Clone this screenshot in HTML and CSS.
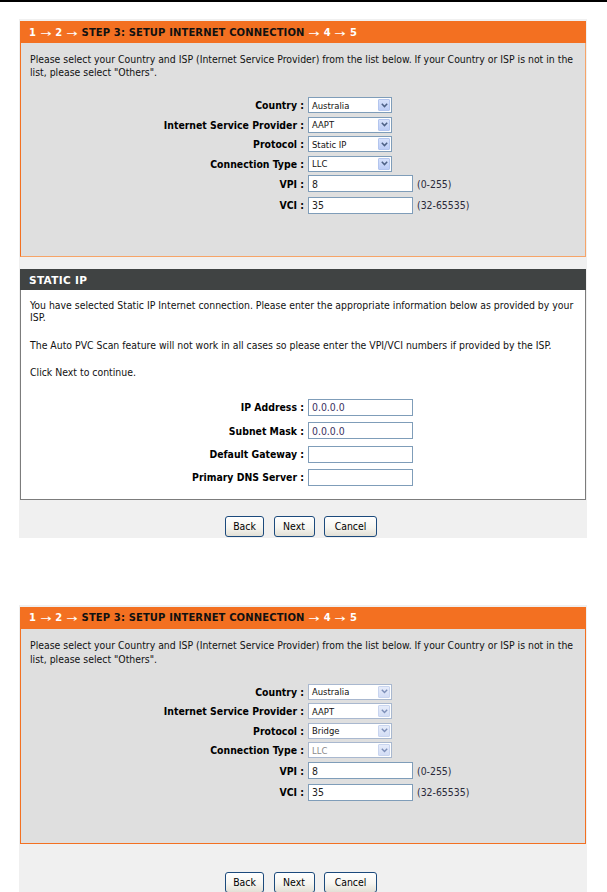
FILE: index.html
```html
<!DOCTYPE html>
<html>
<head>
<meta charset="utf-8">
<title>Setup Internet Connection</title>
<link rel="stylesheet" href="styles.css">
</head>
<body>
<div class="topbar"></div>

<div class="section s1">
  <div class="panel orange">
    <div class="ph"><span class="wt">1 <span class="arr">→</span> 2 <span class="arr">→</span></span> STEP 3: SETUP INTERNET CONNECTION <span class="wt"><span class="arr">→</span> 4 <span class="arr">→</span> 5</span></div>
    <div class="pb">
      <p class="txt1">Please select your Country and ISP (Internet Service Provider) from the list below. If your Country or ISP is not in the<br>list, please select "Others".</p>
      <div class="form">
        <div class="row r-sel"><span class="lbl">Country :</span><div class="sel"><span class="val">Australia</span><span class="dd"><svg width="7" height="5" viewBox="0 0 7 5"><path d="M0.8 0.8 L3.5 3.6 L6.2 0.8" fill="none" stroke="#4d6185" stroke-width="1.5"/></svg></span></div></div>
        <div class="row r-sel"><span class="lbl">Internet Service Provider :</span><div class="sel"><span class="val">AAPT</span><span class="dd"><svg width="7" height="5" viewBox="0 0 7 5"><path d="M0.8 0.8 L3.5 3.6 L6.2 0.8" fill="none" stroke="#4d6185" stroke-width="1.5"/></svg></span></div></div>
        <div class="row r-sel"><span class="lbl">Protocol :</span><div class="sel"><span class="val">Static IP</span><span class="dd"><svg width="7" height="5" viewBox="0 0 7 5"><path d="M0.8 0.8 L3.5 3.6 L6.2 0.8" fill="none" stroke="#4d6185" stroke-width="1.5"/></svg></span></div></div>
        <div class="row r-sel"><span class="lbl">Connection Type :</span><div class="sel"><span class="val">LLC</span><span class="dd"><svg width="7" height="5" viewBox="0 0 7 5"><path d="M0.8 0.8 L3.5 3.6 L6.2 0.8" fill="none" stroke="#4d6185" stroke-width="1.5"/></svg></span></div></div>
        <div class="row r-vpi"><span class="lbl">VPI :</span><input class="txt" type="text" value="8"><span class="hint">(0-255)</span></div>
        <div class="row r-vci"><span class="lbl">VCI :</span><input class="txt" type="text" value="35"><span class="hint">(32-65535)</span></div>
      </div>
    </div>
  </div>

  <div class="panel dark">
    <div class="ph dh">STATIC IP</div>
    <div class="pb sb">
      <p class="txt2">You have selected Static IP Internet connection. Please enter the appropriate information below as provided by your<br>ISP.</p>
      <p class="txt2">The Auto PVC Scan feature will not work in all cases so please enter the VPI/VCI numbers if provided by the ISP.</p>
      <p class="txt2">Click Next to continue.</p>
      <div class="form">
        <div class="row r-ip"><span class="lbl">IP Address :</span><input class="txt ipv" type="text" value="0.0.0.0"></div>
        <div class="row r-ip"><span class="lbl">Subnet Mask :</span><input class="txt ipv" type="text" value="0.0.0.0"></div>
        <div class="row r-ip"><span class="lbl">Default Gateway :</span><input class="txt ipv" type="text" value=""></div>
        <div class="row r-ip"><span class="lbl">Primary DNS Server :</span><input class="txt ipv" type="text" value=""></div>
      </div>
    </div>
  </div>

  <div class="btnbar">
    <button class="btn b-back" type="button">Back</button>
    <button class="btn b-next" type="button">Next</button>
    <button class="btn b-cancel" type="button">Cancel</button>
  </div>
</div>

<div class="section s2">
  <div class="panel orange o2">
    <div class="ph"><span class="wt">1 <span class="arr">→</span> 2 <span class="arr">→</span></span> STEP 3: SETUP INTERNET CONNECTION <span class="wt"><span class="arr">→</span> 4 <span class="arr">→</span> 5</span></div>
    <div class="pb">
      <p class="txt1 lh14">Please select your Country and ISP (Internet Service Provider) from the list below. If your Country or ISP is not in the<br>list, please select "Others".</p>
      <div class="form f2">
        <div class="row r-sel"><span class="lbl">Country :</span><div class="sel light"><span class="val">Australia</span><span class="dd"><svg width="7" height="5" viewBox="0 0 7 5"><path d="M0.8 0.8 L3.5 3.6 L6.2 0.8" fill="none" stroke="#7d8fb8" stroke-width="1.4"/></svg></span></div></div>
        <div class="row r-sel"><span class="lbl">Internet Service Provider :</span><div class="sel light"><span class="val">AAPT</span><span class="dd"><svg width="7" height="5" viewBox="0 0 7 5"><path d="M0.8 0.8 L3.5 3.6 L6.2 0.8" fill="none" stroke="#7d8fb8" stroke-width="1.4"/></svg></span></div></div>
        <div class="row r-sel"><span class="lbl">Protocol :</span><div class="sel light"><span class="val">Bridge</span><span class="dd"><svg width="7" height="5" viewBox="0 0 7 5"><path d="M0.8 0.8 L3.5 3.6 L6.2 0.8" fill="none" stroke="#7d8fb8" stroke-width="1.4"/></svg></span></div></div>
        <div class="row r-sel"><span class="lbl">Connection Type :</span><div class="sel light"><span class="val dis">LLC</span><span class="dd"><svg width="7" height="5" viewBox="0 0 7 5"><path d="M0.8 0.8 L3.5 3.6 L6.2 0.8" fill="none" stroke="#7d8fb8" stroke-width="1.4"/></svg></span></div></div>
        <div class="row r-vpi"><span class="lbl">VPI :</span><input class="txt" type="text" value="8"><span class="hint">(0-255)</span></div>
        <div class="row r-vci"><span class="lbl">VCI :</span><input class="txt" type="text" value="35"><span class="hint">(32-65535)</span></div>
      </div>
    </div>
  </div>

  <div class="btnbar bb2">
    <button class="btn b-back" type="button">Back</button>
    <button class="btn b-next" type="button">Next</button>
    <button class="btn b-cancel" type="button">Cancel</button>
  </div>
</div>
</body>
</html>
```

FILE: styles.css
```css
* { box-sizing: border-box; }

body {
  margin: 0;
  background: #ffffff;
  font-family: "DejaVu Sans Condensed", "DejaVu Sans", sans-serif;
  font-size: 10.4px;
  color: #111111;
}

.topbar {
  height: 2px;
  background: #000000;
}

.section {
  width: 568px;
  margin-left: 19px;
  background: #f0f0f0;
  padding: 2px 1px 0 1px;
}

.s1 { margin-top: 17px; }
.s2 { margin-top: 67px; height: 300px; }

.panel { width: 566px; }

.ph {
  height: 22px;
  display: flex;
  align-items: center;
  padding-left: 9px;
  background: #f37021;
  color: #111111;
  font-family: "DejaVu Sans", sans-serif;
  font-weight: bold;
  font-size: 10px;
  letter-spacing: 0.12px;
  white-space: pre;
}

.wt { color: #ffffff; }

.arr {
  display: inline-block;
  width: 12px;
  text-align: center;
  font-weight: normal;
  transform: scaleX(1.35);
  position: relative;
  top: 1px;
}

.pb {
  background: #dfdfdf;
  border: 1px solid #f6a468;
  border-left-color: #f37021;
  border-top: none;
  padding: 9.5px 8px 39.75px 9px;
}

.o2 .pb { border-color: #f37021; }

.dark { margin-top: 12px; }

.dh {
  height: 21px;
  background: #404343;
  color: #ffffff;
  font-size: 10.5px;
  letter-spacing: 0.35px;
}

.sb {
  background: #ffffff;
  border: 1px solid #7c7c7c;
  border-top: none;
  padding: 8.75px 8px 9.9px 9px;
}

p { margin: 0; white-space: nowrap; }

.txt1 { line-height: 13px; }
.lh14 { line-height: 14px; }

.txt2 { line-height: 12.5px; margin-bottom: 15px; }
.txt2:last-of-type { margin-bottom: 0; }

.form { margin-top: 16.75px; }
.f2 { margin-top: 15.75px; }
.sb .form { margin-top: 17px; }

.row {
  display: flex;
  align-items: center;
}

.r-sel { height: 19.5px; }
.r-vpi { height: 21px; }
.r-vci { height: 22px; }
.r-ip { height: 23.33px; }

.lbl {
  width: 274px;
  margin-right: 4px;
  text-align: right;
  font-weight: bold;
  color: #000000;
  white-space: nowrap;
}

.sel {
  width: 84px;
  height: 16px;
  border: 1px solid #7f9db9;
  background: #ffffff;
  display: flex;
  align-items: center;
  justify-content: space-between;
  padding-left: 3px;
}

.sel.light { border-color: #a9b8cf; }

.val {
  font-size: 9.4px;
  color: #111111;
}

.val.dis { color: #8a8a8a; }

.dd {
  width: 12px;
  height: 12px;
  margin-right: 1px;
  background: linear-gradient(#d6e1fb, #bccdf6);
  border: 1px solid #b3c5ee;
  border-radius: 1px;
  display: flex;
  align-items: center;
  justify-content: center;
}

.sel.light .dd {
  background: linear-gradient(#e6ecfa, #d3ddf5);
  border-color: #c9d5ef;
}

.txt {
  width: 105px;
  height: 17px;
  border: 1px solid #7f9db9;
  background: #ffffff;
  padding: 0 3px;
  margin: 0;
  font-family: "DejaVu Sans Condensed", "DejaVu Sans", sans-serif;
  font-size: 10.4px;
  color: #222222;
  outline: none;
}

.ipv { color: #3b2f5e; }

.hint {
  margin-left: 4px;
  color: #2a2a3a;
}

.btnbar {
  display: flex;
  justify-content: center;
  gap: 9.5px;
  padding: 16px 4px 1px 0;
}

.bb2 { padding-top: 28px; }

.btn {
  height: 21px;
  padding: 0;
  border: 1px solid #1c4a7c;
  border-radius: 3px;
  background: linear-gradient(#ffffff 0%, #f6f5f0 55%, #e2e0d6 100%);
  font-family: "DejaVu Sans Condensed", "DejaVu Sans", sans-serif;
  font-size: 10.4px;
  color: #000000;
}

.b-back { width: 39px; }
.b-next { width: 41px; }
.b-cancel { width: 53px; }
```
